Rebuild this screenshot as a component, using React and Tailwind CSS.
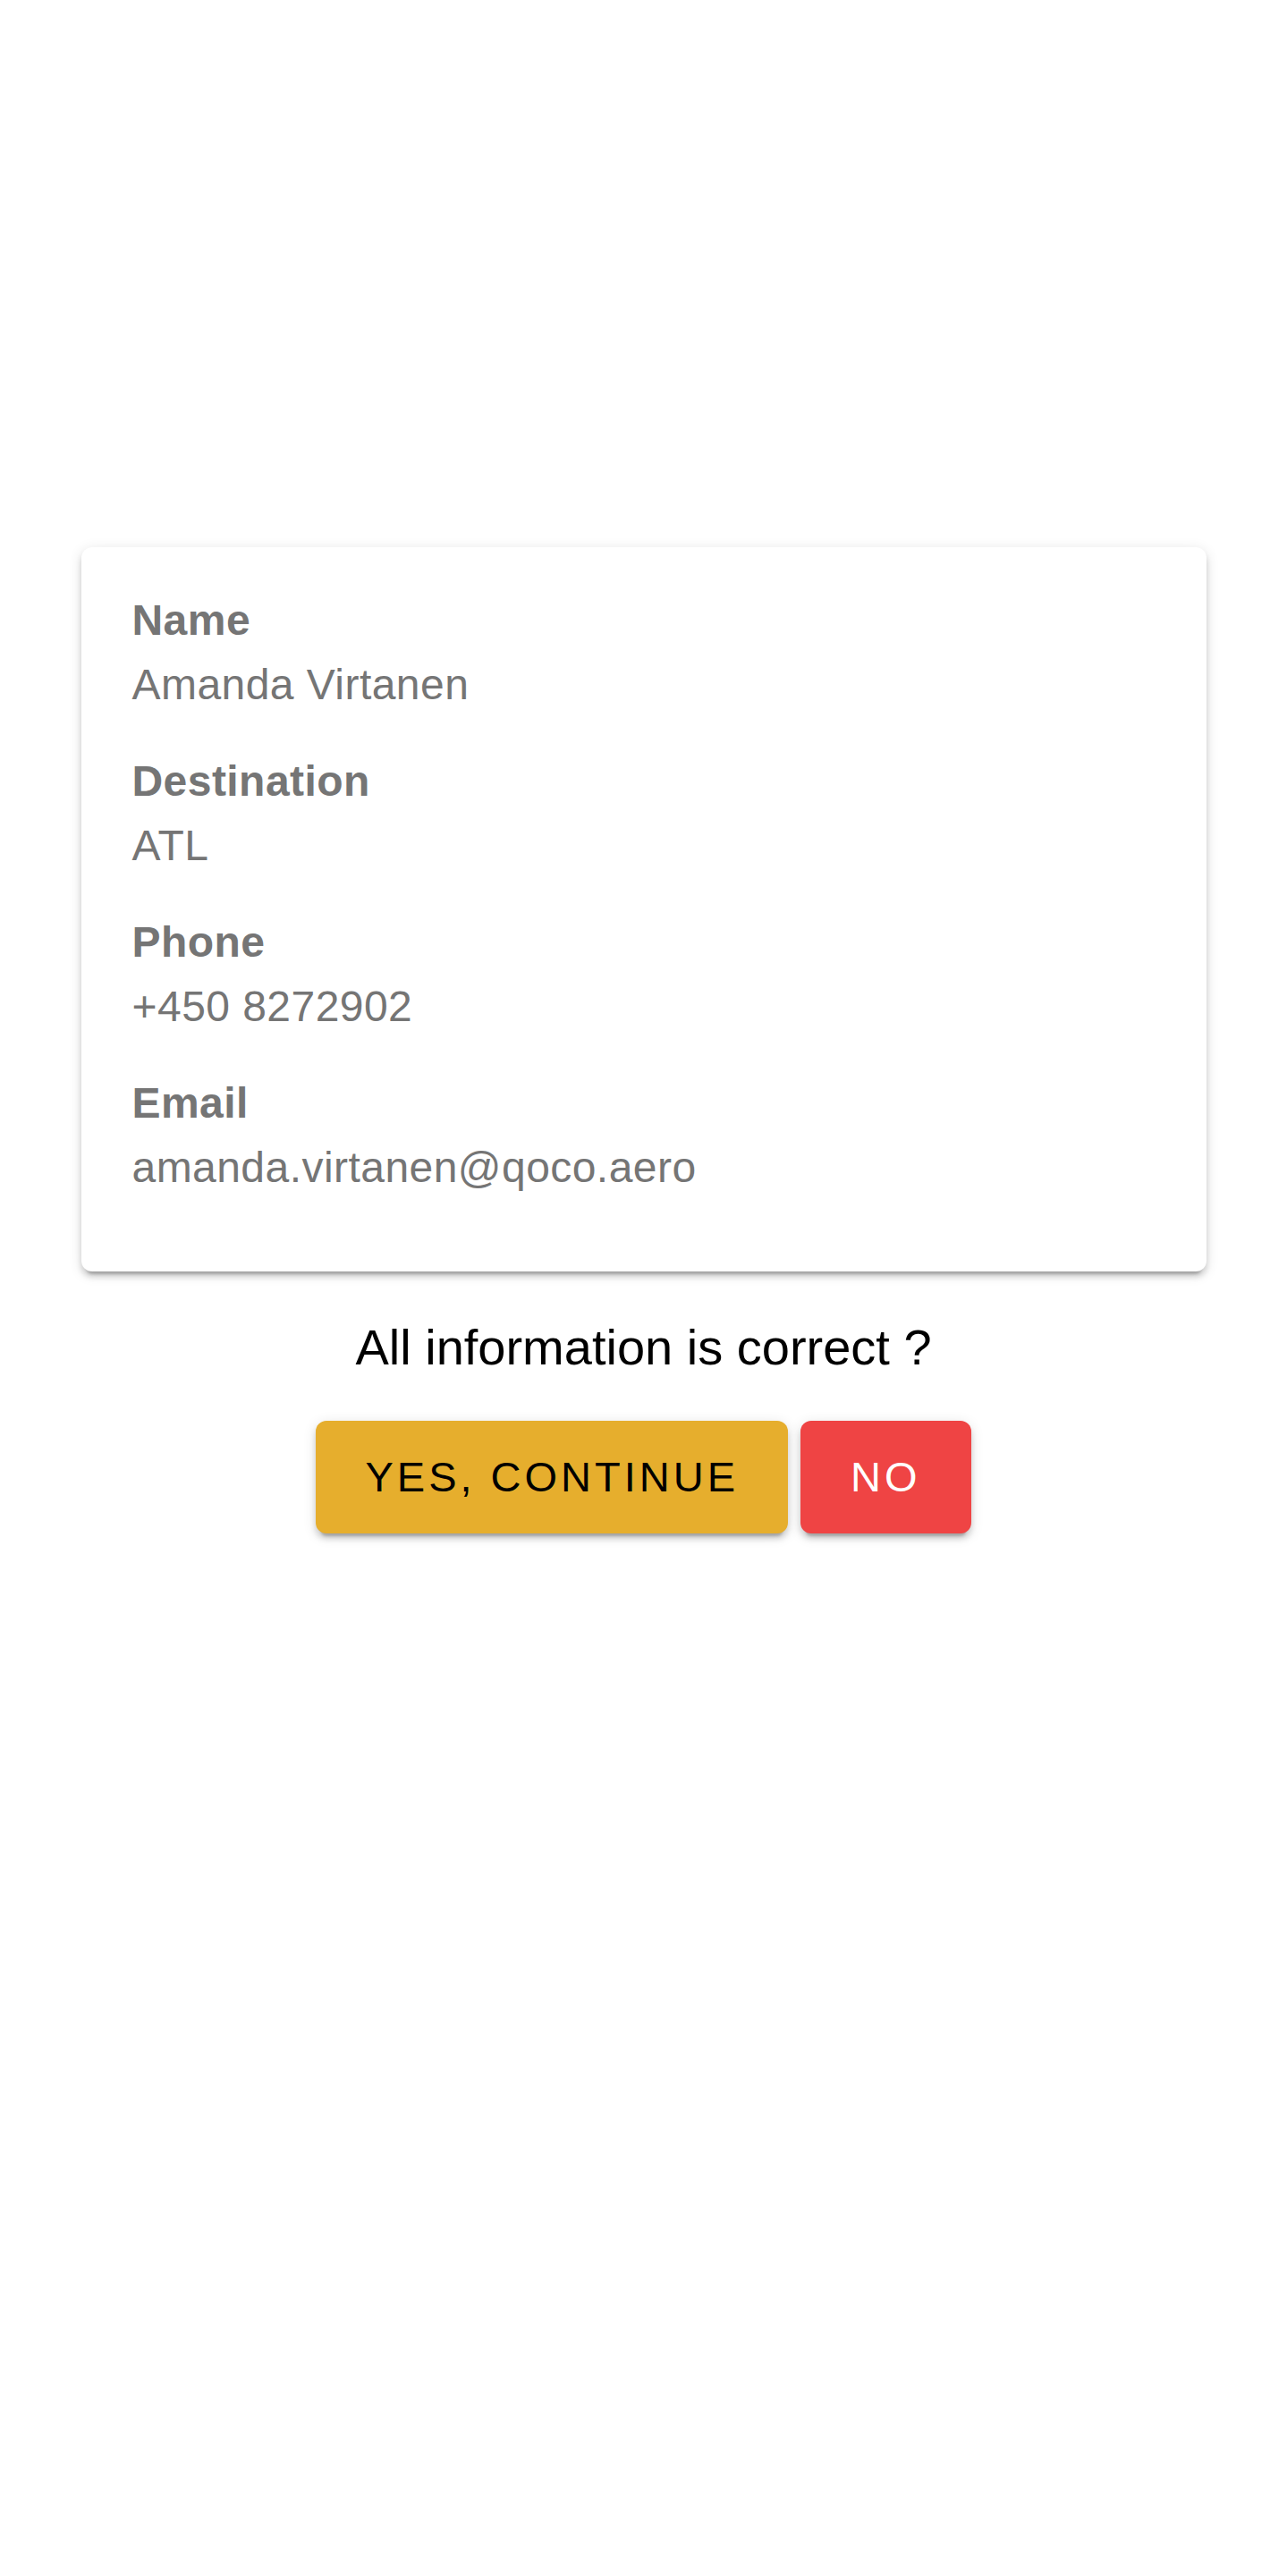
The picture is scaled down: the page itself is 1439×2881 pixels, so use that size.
import React from 'react';

const fields = [
  { label: 'Name', value: 'Amanda Virtanen' },
  { label: 'Destination', value: 'ATL' },
  { label: 'Phone', value: '+450 8272902' },
  { label: 'Email', value: 'amanda.virtanen@qoco.aero' },
];

const raised =
  'shadow-[0_9px_3px_-6px_rgba(0,0,0,0.2),0_6px_6px_0_rgba(0,0,0,0.14),0_3px_15px_0_rgba(0,0,0,0.12)]';

const App = () => {
  return (
    <div className="min-h-[2881px] bg-white font-['Liberation_Sans',Arial,sans-serif]">
      <div className="pt-[612px]">
        {/* Summary card */}
        <div className={`mx-auto w-[1258px] rounded-xl bg-white pl-[57px] pr-12 pt-[46px] pb-[80px] ${raised}`}>
          <div className="flex flex-col gap-[36px]">
            {fields.map((f) => (
              <div key={f.label} className="text-[48px] leading-[72px] tracking-[0.45px] text-[#757575]">
                <div className="font-bold">{f.label}</div>
                <div>{f.value}</div>
              </div>
            ))}
          </div>
        </div>

        {/* Confirmation */}
        <p className="mt-[43px] text-center text-[56px] leading-[84px] text-black">
          All information is correct ?
        </p>

        <div className="mt-[40px] flex justify-center gap-[14px]">
          <button
            className={`h-[126px] rounded-xl bg-[#e6ae2d] px-[55px] text-[47px] tracking-[4px] text-black ${raised}`}
          >
            YES, CONTINUE
          </button>
          <button
            className={`h-[126px] rounded-xl bg-[#ef4444] px-[56px] text-[47px] tracking-[4px] text-white ${raised}`}
          >
            NO
          </button>
        </div>
      </div>
    </div>
  );
};

export default App;
